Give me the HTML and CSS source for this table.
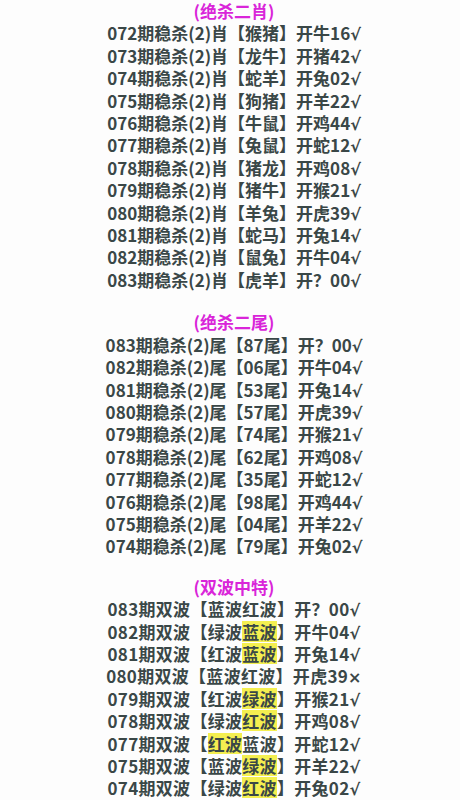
FILE: index.html
```html
<!DOCTYPE html>
<html>
    <head>
        <title>稳杀</title>
        <meta charset="utf-8">
        <link rel="stylesheet" href="styles.css">
    </head>
    <body>
        <div class="box">
            <div class="title">(绝杀二肖)</div>
            <p>072期稳杀(2)肖【猴猪】开牛16<i>√</i></p>
            <p>073期稳杀(2)肖【龙牛】开猪42<i>√</i></p>
            <p>074期稳杀(2)肖【蛇羊】开兔02<i>√</i></p>
            <p>075期稳杀(2)肖【狗猪】开羊22<i>√</i></p>
            <p>076期稳杀(2)肖【牛鼠】开鸡44<i>√</i></p>
            <p>077期稳杀(2)肖【兔鼠】开蛇12<i>√</i></p>
            <p>078期稳杀(2)肖【猪龙】开鸡08<i>√</i></p>
            <p>079期稳杀(2)肖【猪牛】开猴21<i>√</i></p>
            <p>080期稳杀(2)肖【羊兔】开虎39<i>√</i></p>
            <p>081期稳杀(2)肖【蛇马】开兔14<i>√</i></p>
            <p>082期稳杀(2)肖【鼠兔】开牛04<i>√</i></p>
            <p>083期稳杀(2)肖【虎羊】开？00<i>√</i></p>
        </div>
        <div class="box">
            <div class="title">(绝杀二尾)</div>
            <p>083期稳杀(2)尾【87尾】开？00<i>√</i></p>
            <p>082期稳杀(2)尾【06尾】开牛04<i>√</i></p>
            <p>081期稳杀(2)尾【53尾】开兔14<i>√</i></p>
            <p>080期稳杀(2)尾【57尾】开虎39<i>√</i></p>
            <p>079期稳杀(2)尾【74尾】开猴21<i>√</i></p>
            <p>078期稳杀(2)尾【62尾】开鸡08<i>√</i></p>
            <p>077期稳杀(2)尾【35尾】开蛇12<i>√</i></p>
            <p>076期稳杀(2)尾【98尾】开鸡44<i>√</i></p>
            <p>075期稳杀(2)尾【04尾】开羊22<i>√</i></p>
            <p>074期稳杀(2)尾【79尾】开兔02<i>√</i></p>
        </div>
        <div class="box last">
            <div class="title">(双波中特)</div>
            <p>083期双波【蓝波红波】开？00<i>√</i></p>
            <p>082期双波【绿波<span class="hl">蓝波</span>】开牛04<i>√</i></p>
            <p>081期双波【红波<span class="hl">蓝波</span>】开兔14<i>√</i></p>
            <p>080期双波【蓝波红波】开虎39<i>×</i></p>
            <p>079期双波【红波<span class="hl">绿波</span>】开猴21<i>√</i></p>
            <p>078期双波【绿波<span class="hl">红波</span>】开鸡08<i>√</i></p>
            <p>077期双波【<span class="hl">红波</span>蓝波】开蛇12<i>√</i></p>
            <p>075期双波【蓝波<span class="hl">绿波</span>】开羊22<i>√</i></p>
            <p>074期双波【绿波<span class="hl">红波</span>】开兔02<i>√</i></p>
        </div>
    </body>
</html>
```

FILE: styles.css
```css
* {
    margin: 0;
    padding: 0;
}
body {
    background-color: #fdfdfd;
    font-family: "Noto Sans CJK SC", "Noto Sans", sans-serif;
    font-size: 17px;
    font-weight: bold;
    color: #3a4747;
    text-align: center;
    padding-left: 8px;
}
.box {
    line-height: 22.4px;
}
.box + .box {
    margin-top: 20px;
}
.last {
    margin-top: 18px !important;
}
.last p {
    letter-spacing: 0.3px;
}
.title {
    color: #d925d9;
}
i {
    font-style: normal;
    font-family: "DejaVu Sans", sans-serif;
    font-size: 16px;
    line-height: 0;
}
.hl {
    display: inline-block;
    line-height: 21px;
    background-color: #f4ef50;
}
```
